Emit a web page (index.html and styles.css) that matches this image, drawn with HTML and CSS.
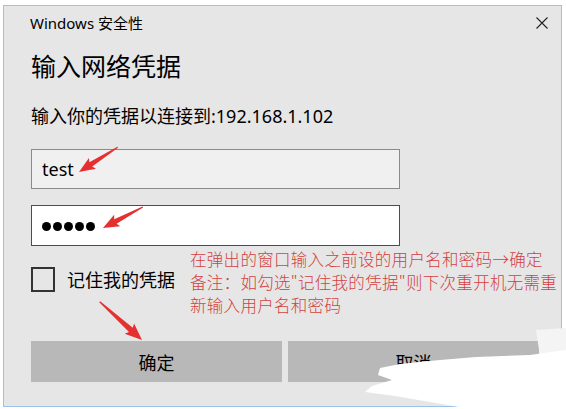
FILE: index.html
```html
<!DOCTYPE html>
<html lang="zh-CN">
<head>
<meta charset="utf-8">
<title>Windows 安全性</title>
<link rel="stylesheet" href="styles.css">
</head>
<body>
<div class="dialog">
  <div class="titlebar">
    <span class="title">Windows 安全性</span>
    <svg class="close" width="12" height="12" viewBox="0 0 12 12"><path d="M0.5 0.5L11.5 11.5M11.5 0.5L0.5 11.5" stroke="#222" stroke-width="1.1" fill="none"/></svg>
  </div>
  <div class="content">
    <h1 class="heading">输入网络凭据</h1>
    <p class="info">输入你的凭据以连接到:192.168.1.102</p>
    <div class="field field-user">test</div>
    <div class="field field-pass">
      <span class="dot"></span><span class="dot"></span><span class="dot"></span><span class="dot"></span><span class="dot"></span>
    </div>
    <div class="remember">
      <span class="checkbox"></span>
      <span class="remember-label">记住我的凭据</span>
    </div>
    <div class="buttons">
      <div class="btn">确定</div>
      <div class="btn">取消</div>
    </div>
  </div>
</div>
<div class="note">在弹出的窗口输入之前设的用户名和密码→确定<br>备注：如勾选"记住我的凭据"则下次重开机无需重<br>新输入用户名和密码</div>
<svg class="overlay" width="566" height="409" viewBox="0 0 566 409">
  <g fill="#e53030">
    <polygon transform="translate(79,172) rotate(147.3)" points="-46,-0.6 -14,-2.6 -16,-6.5 0,0 -16,6.5 -14,2.6 -46,0.6"/>
    <polygon transform="translate(103,228) rotate(152.3)" points="-45,-0.6 -14,-2.6 -16,-6.5 0,0 -16,6.5 -14,2.6 -45,0.6"/>
    <polygon transform="translate(142,340) rotate(42.1)" points="-57,-0.7 -15,-2.8 -17,-7 0,0 -17,7 -15,2.8 -57,0.7"/>
  </g>
  <path fill="#f4f4f4" d="M536 330 L566 328 L566 352 L540 356 Z"/>
  <path fill="#ffffff" d="M380 368 L400 364 L440 360 L476 357 L530 355 L566 350 L566 409 L470 409 L430 402 L395 396 L365 392 L372 386 L392 380 L378 375 Z"/>
</svg>
</body>
</html>
```
FILE: styles.css
```css
html, body {
  margin: 0;
  padding: 0;
  background: #ffffff;
}
body {
  width: 566px;
  height: 409px;
  position: relative;
  overflow: hidden;
  font-family: "Noto Sans", "Noto Sans CJK SC", sans-serif;
  color: #000;
}
.dialog {
  box-sizing: border-box;
  margin: 5px 0 0 3px;
  width: 559px;
  height: 402px;
  border: 1px solid #9cc1ee;
  background: #e6e6e6;
  display: flex;
  flex-direction: column;
}
.titlebar {
  height: 34px;
  display: flex;
  align-items: center;
  justify-content: space-between;
  padding: 0 13px 0 26px;
}
.title {
  font-size: 15px;
  line-height: 20px;
}
.close {
  display: block;
  margin-top: -1px;
}
.content {
  padding: 0 20px 0 27px;
  display: flex;
  flex-direction: column;
}
.heading {
  margin: 10px 0 0;
  font-size: 25px;
  font-weight: normal;
  line-height: 32px;
}
.info {
  margin: 22px 0 0;
  font-size: 18px;
  line-height: 24px;
}
.field {
  box-sizing: border-box;
  width: 369px;
  height: 40px;
  display: flex;
  align-items: center;
  padding-left: 10px;
  font-size: 18px;
}
.field-user {
  margin-top: 21px;
  background: #f0f0f0;
  border: 1px solid #8a8a8a;
}
.field-pass {
  margin-top: 16px;
  height: 41px;
  background: #ffffff;
  border: 1px solid #1d5a7e;
  gap: 2px;
  padding-top: 2px;
}
.dot {
  width: 9px;
  height: 9px;
  border-radius: 50%;
  background: #000;
}
.remember {
  margin-top: 21px;
  display: flex;
  align-items: center;
  height: 25px;
}
.checkbox {
  box-sizing: border-box;
  width: 24px;
  height: 25px;
  border: 2px solid #333;
}
.remember-label {
  margin-left: 12px;
  font-size: 18px;
  line-height: 24px;
}
.buttons {
  margin-top: 49px;
  display: flex;
  gap: 6px;
}
.btn {
  flex: 0 0 251px;
  height: 41px;
  background: #b8b8b8;
  display: flex;
  align-items: center;
  justify-content: center;
  font-size: 18px;
}
.note {
  position: absolute;
  left: 190px;
  top: 248px;
  font-size: 16.5px;
  line-height: 23px;
  letter-spacing: 0.3px;
  color: #d44040;
  white-space: nowrap;
  font-family: "Noto Sans CJK SC", sans-serif;
  font-weight: 300;
}
.overlay {
  position: absolute;
  left: 0;
  top: 0;
  pointer-events: none;
}
```
